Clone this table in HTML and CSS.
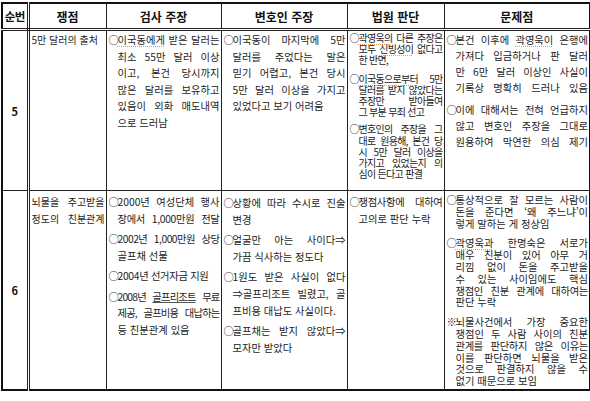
FILE: index.html
```html
<!DOCTYPE html>
<html lang="ko">
<head>
<meta charset="utf-8">
<link rel="stylesheet" href="styles.css">
</head>
<body>
<div class="wrap">
<table class="grid">
  <colgroup>
    <col class="c-no"><col class="c-issue"><col class="c-pros"><col class="c-def"><col class="c-court"><col class="c-prob">
  </colgroup>
  <thead>
    <tr class="head">
      <th class="no">순번</th>
      <th>쟁점</th>
      <th>검사 주장</th>
      <th>변호인 주장</th>
      <th>법원 판단</th>
      <th>문제점</th>
    </tr>
  </thead>
  <tbody>
    <tr class="r5">
      <td class="no">5</td>
      <td><div class="cell lh16 small"><span class="l e">5만 달러의 출처</span></div></td>
      <td><div class="cell lh16">
        <div class="p">
          <span class="l"><span class="b">○</span><span class="sp">이국동에게</span> 받은 달러는</span>
          <span class="l i">최소 55만 달러 이상</span>
          <span class="l i">이고, 본건 당시까지</span>
          <span class="l i">많은 달러를 보유하고</span>
          <span class="l i">있음이 외화 매도내역</span>
          <span class="l i e">으로 드러남</span>
        </div>
      </div></td>
      <td><div class="cell lh16">
        <div class="p">
          <span class="l"><span class="b">○</span>이국동이 마지막에 5만</span>
          <span class="l i">달러를 주었다는 말은</span>
          <span class="l i">믿기 어렵고, 본건 당시</span>
          <span class="l i">5만 달러 이상을 가지고</span>
          <span class="l i e">있었다고 보기 어려움</span>
        </div>
      </div></td>
      <td><div class="cell lh11 tight">
        <div class="p gap7">
          <span class="l"><span class="b">○</span><span class="sp">곽영욱의</span> 다른 주장은</span>
          <span class="l i">모두 <span class="sp">신빙성이</span> 없다고</span>
          <span class="l i e">한 반면,</span>
        </div>
        <div class="p gap6">
          <span class="l"><span class="b">○</span><span class="sp">이국동으로부터</span> 5만</span>
          <span class="l i">달러를 받지 않았다는</span>
          <span class="l i">주장만 받아들여</span>
          <span class="l i e">그 부분 무죄 선고</span>
        </div>
        <div class="p">
          <span class="l"><span class="b">○</span>변호인의 주장을 그</span>
          <span class="l i">대로 원용해, 본건 당</span>
          <span class="l i">시 5만 달러 이상을</span>
          <span class="l i">가지고 있었는지 의</span>
          <span class="l i e">심이 든다고 판결</span>
        </div>
      </div></td>
      <td><div class="cell lh16b">
        <div class="p gap6">
          <span class="l"><span class="b">○</span>본건 이후에 <span class="sp">곽영욱이</span> 은행에</span>
          <span class="l i">가져다 입금하거나 판 달러</span>
          <span class="l i">만 6만 달러 이상인 사실이</span>
          <span class="l i">기록상 명확히 드러나 있음</span>
        </div>
        <div class="p">
          <span class="l"><span class="b">○</span>이에 대해서는 전혀 언급하지</span>
          <span class="l i">않고 변호인 주장을 그대로</span>
          <span class="l i">원용하여 막연한 의심 제기</span>
        </div>
      </div></td>
    </tr>
    <tr class="r6">
      <td class="no">6</td>
      <td><div class="cell lh16 small">
        <span class="l">뇌물을 주고받을</span>
        <span class="l">정도의 친분관계</span>
      </div></td>
      <td><div class="cell lh16">
        <div class="p gap4">
          <span class="l"><span class="b">○</span>2000년 여성단체 행사</span>
          <span class="l i c3">장에서 1,000만원 전달</span>
        </div>
        <div class="p gap4">
          <span class="l c5"><span class="b">○</span>2002년 1,000만원 상당</span>
          <span class="l i e">골프채 선물</span>
        </div>
        <div class="p gap4">
          <span class="l e c3"><span class="b">○</span>2004년 선거자금 지원</span>
        </div>
        <div class="p">
          <span class="l c8"><span class="b">○</span>2008년 <span class="u">골프리조트</span> 무료</span>
          <span class="l i c8">제공, 골프비용 대납하는</span>
          <span class="l i e">등 친분관계 있음</span>
        </div>
      </div></td>
      <td><div class="cell lh17">
        <div class="p gap3">
          <span class="l"><span class="b">○</span>상황에 따라 수시로 진술</span>
          <span class="l i e">변경</span>
        </div>
        <div class="p gap3">
          <span class="l"><span class="b">○</span>얼굴만 아는 사이다⇒</span>
          <span class="l i e">가끔 식사하는 정도다</span>
        </div>
        <div class="p gap3">
          <span class="l"><span class="b">○</span>1원도 받은 사실이 없다</span>
          <span class="l i">⇒골프리조트 빌렸고, 골</span>
          <span class="l i e">프비용 대납도 사실이다.</span>
        </div>
        <div class="p">
          <span class="l"><span class="b">○</span>골프채는 받지 않았다⇒</span>
          <span class="l i e">모자만 받았다</span>
        </div>
      </div></td>
      <td><div class="cell lh16">
        <div class="p">
          <span class="l c3"><span class="b">○</span>쟁점사항에 대하여</span>
          <span class="l i e">고의로 판단 누락</span>
        </div>
      </div></td>
      <td><div class="cell lh12">
        <div class="p gap8">
          <span class="l"><span class="b">○</span>통상적으로 잘 모르는 사람이</span>
          <span class="l i">돈을 준다면 ‘왜 주느냐’이</span>
          <span class="l i e">렇게 말하는 게 정상임</span>
        </div>
        <div class="p gap8">
          <span class="l"><span class="b">○</span><span class="sp">곽영욱과</span> 한명숙은 서로가</span>
          <span class="l i">매우 친분이 있어 아무 거</span>
          <span class="l i">리낌 없이 돈을 주고받을</span>
          <span class="l i">수 있는 사이임에도 핵심</span>
          <span class="l i c3">쟁점인 친분 관계에 대하여는</span>
          <span class="l i e">판단 누락</span>
        </div>
        <div class="p">
          <span class="l"><span class="b">※</span>뇌물사건에서 가장 중요한</span>
          <span class="l i">쟁점인 두 사람 사이의 친분</span>
          <span class="l i c3">관계를 판단하지 않은 이유는</span>
          <span class="l i">이를 판단하면 뇌물을 받은</span>
          <span class="l i">것으로 판결하지 않을 수</span>
          <span class="l i e">없기 때문으로 보임</span>
        </div>
      </div></td>
    </tr>
  </tbody>
</table>
</div>
</body>
</html>
```
FILE: styles.css
```css
html, body {
  margin: 0;
  padding: 0;
  background: #ffffff;
}

body {
  font-family: "Noto Sans CJK KR", "Noto Sans", sans-serif;
  color: #1c1c1c;
}

.wrap {
  padding: 2px 0 0 1px;
}

.grid {
  border-collapse: collapse;
  table-layout: fixed;
  width: 588px;
  border: 2px solid #111111;
}

.c-no { width: 26px; }
.c-issue { width: 78px; }
.c-pros { width: 115px; }
.c-def { width: 126px; }
.c-court { width: 97px; }
.c-prob { width: 146px; }

.grid th,
.grid td {
  border: 1px solid #222222;
  padding: 0;
  vertical-align: top;
}

.grid thead th {
  border-bottom: 3px double #222222;
  font-size: 12px;
  font-weight: 700;
  text-align: center;
  vertical-align: middle;
  color: #111111;
  height: 24px;
}

.grid .no {
  border-right: 3px double #222222;
  text-align: center;
  vertical-align: middle;
  font-weight: 700;
  font-size: 11px;
  color: #111111;
}

.grid thead th.no {
  font-size: 11.5px;
  letter-spacing: -0.6px;
}

.r5 td { height: 159px; }
.r6 td { height: 198px; }

.cell {
  padding: 3px 1px 0 2px;
  font-size: 10.3px;
}

.r5 .cell { padding-top: 1px; }

.small { font-size: 10px; }

.lh16 { line-height: 16.5px; }
.lh16b { line-height: 16px; }
.lh17 { line-height: 17px; }
.lh11 { line-height: 11.2px; }
.lh12 { line-height: 11.8px; }

.tight {
  font-size: 10px;
  letter-spacing: -0.7px;
}

.c3 { letter-spacing: -0.3px; }
.c5 { letter-spacing: -0.5px; }
.c8 { letter-spacing: -0.8px; }

.p { margin: 0; }
.gap3 { margin-bottom: 3px; }
.gap4 { margin-bottom: 4px; }
.gap6 { margin-bottom: 6px; }
.gap7 { margin-bottom: 7px; }
.gap8 { margin-bottom: 8px; }

.l {
  display: block;
  white-space: nowrap;
  text-align: justify;
  text-align-last: justify;
}

.l.e {
  text-align-last: left;
}

.l.i {
  padding-left: 9px;
}

.b {
  display: inline-block;
  width: 9px;
  letter-spacing: 0;
}

.sp {
  text-decoration: underline dotted #e59a55;
  text-underline-offset: 2px;
}

.u {
  text-decoration: underline;
  text-decoration-color: #555555;
  text-underline-offset: 1px;
}
```
